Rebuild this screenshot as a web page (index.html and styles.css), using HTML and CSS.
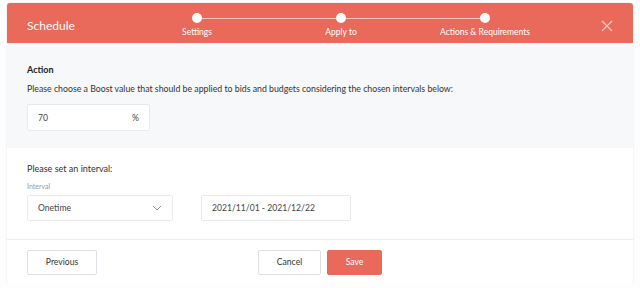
FILE: index.html
```html
<!DOCTYPE html>
<html>
<head>
    <title>Schedule</title>
    <link rel="stylesheet" href="styles.css">
</head>
<body>
    <div class="modal">
        <div class="modal-header">
            <div class="title">Schedule</div>
            <div class="steps">
                <div class="step"><span class="dot"></span><span class="label">Settings</span></div>
                <div class="step"><span class="dot"></span><span class="label">Apply to</span></div>
                <div class="step last"><span class="dot"></span><span class="label">Actions &amp; Requirements</span></div>
            </div>
            <div class="close">
                <svg width="12" height="12" viewBox="0 0 12 12"><path d="M1 1L11 11M11 1L1 11" stroke="currentColor" stroke-width="1.2" fill="none"/></svg>
            </div>
        </div>

        <div class="section grey">
            <div class="heading">Action</div>
            <p class="desc">Please choose a Boost value that should be applied to bids and budgets considering the chosen intervals below:</p>
            <div class="field boost">
                <span>70</span>
                <span>%</span>
            </div>
        </div>

        <div class="section">
            <p class="sub">Please set an interval:</p>
            <div class="small-label">Interval</div>
            <div class="row">
                <div class="field select">
                    <span>Onetime</span>
                    <svg width="10" height="6" viewBox="0 0 10 6"><path d="M1 1L5 5L9 1" stroke="#8a8f96" stroke-width="1" fill="none"/></svg>
                </div>
                <div class="field date">2021/11/01 - 2021/12/22</div>
            </div>
        </div>

        <div class="footer">
            <div><button class="btn">Previous</button></div>
            <div class="center">
                <button class="btn cancel">Cancel</button>
                <button class="btn save">Save</button>
            </div>
            <div></div>
        </div>
    </div>
</body>
</html>
```

FILE: styles.css
```css
* {
    margin: 0;
    padding: 0;
    box-sizing: border-box;
    font-family: Lato, "Liberation Sans", sans-serif;
}
body {
    background: #fdfdfd;
}
.modal {
    width: 626px;
    margin: 3px 0 0 7px;
    background: #fff;
    box-shadow: 0 0 2px rgba(0,0,0,0.12);
    border-radius: 3px;
    overflow: hidden;
}
.modal-header {
    height: 40px;
    background: #e9695b;
    display: flex;
    align-items: center;
    color: #fff;
}
.title {
    width: 118px;
    padding-left: 20px;
    padding-top: 5px;
    font-size: 12px;
}
.steps {
    display: flex;
    width: 432px;
    height: 40px;
}
.step {
    position: relative;
    width: 144px;
    display: flex;
    flex-direction: column;
    align-items: center;
}
.dot {
    width: 10px;
    height: 10px;
    margin-top: 10px;
    border-radius: 50%;
    background: #fff;
}
.step::after {
    content: "";
    position: absolute;
    top: 14.5px;
    left: calc(50% + 5px);
    width: 134px;
    height: 1px;
    background: rgba(255,255,255,0.6);
}
.step.last::after {
    display: none;
}
.label {
    margin-top: 4px;
    font-size: 8.5px;
    color: #fff;
}
.close {
    margin-left: auto;
    padding-right: 20px;
    padding-top: 5px;
    display: flex;
    color: rgba(255,255,255,0.65);
}
.section {
    padding: 0 20px;
}
.section.grey {
    background: #f7f8fa;
    height: 105px;
    padding-top: 21px;
}
.heading {
    font-size: 9px;
    font-weight: bold;
    color: #222;
}
.desc {
    margin-top: 8px;
    font-size: 8.75px;
    color: #333;
}
.field {
    background: #fff;
    border: 1px solid #e8eaed;
    border-radius: 2px;
    height: 27px;
    display: flex;
    align-items: center;
    font-size: 8.6px;
    color: #444;
    padding: 0 10px;
}
.boost {
    width: 123px;
    margin-top: 10px;
    justify-content: space-between;
}
.sub {
    margin-top: 15px;
    font-size: 9px;
    color: #333;
}
.small-label {
    margin-top: 8px;
    font-size: 7px;
    color: #999;
}
.row {
    display: flex;
    gap: 28px;
    margin-top: 5px;
    height: 44px;
}
.select {
    width: 146px;
    height: 26px;
    justify-content: space-between;
}
.date {
    width: 150px;
    height: 26px;
}
.footer {
    border-top: 1px solid #eceef0;
    height: 45px;
    padding: 0 20px;
    display: grid;
    grid-template-columns: 1fr auto 1fr;
    align-items: center;
}
.center {
    display: flex;
    gap: 6px;
}
.btn {
    height: 25px;
    background: #fff;
    border: 1px solid #dcdfe3;
    border-radius: 2px;
    font-size: 8.6px;
    color: #333;
    width: 70px;
}
.cancel {
    width: 63px;
}
.save {
    width: 55px;
    background: #e9695b;
    border-color: #e9695b;
    color: #fff;
}
```
